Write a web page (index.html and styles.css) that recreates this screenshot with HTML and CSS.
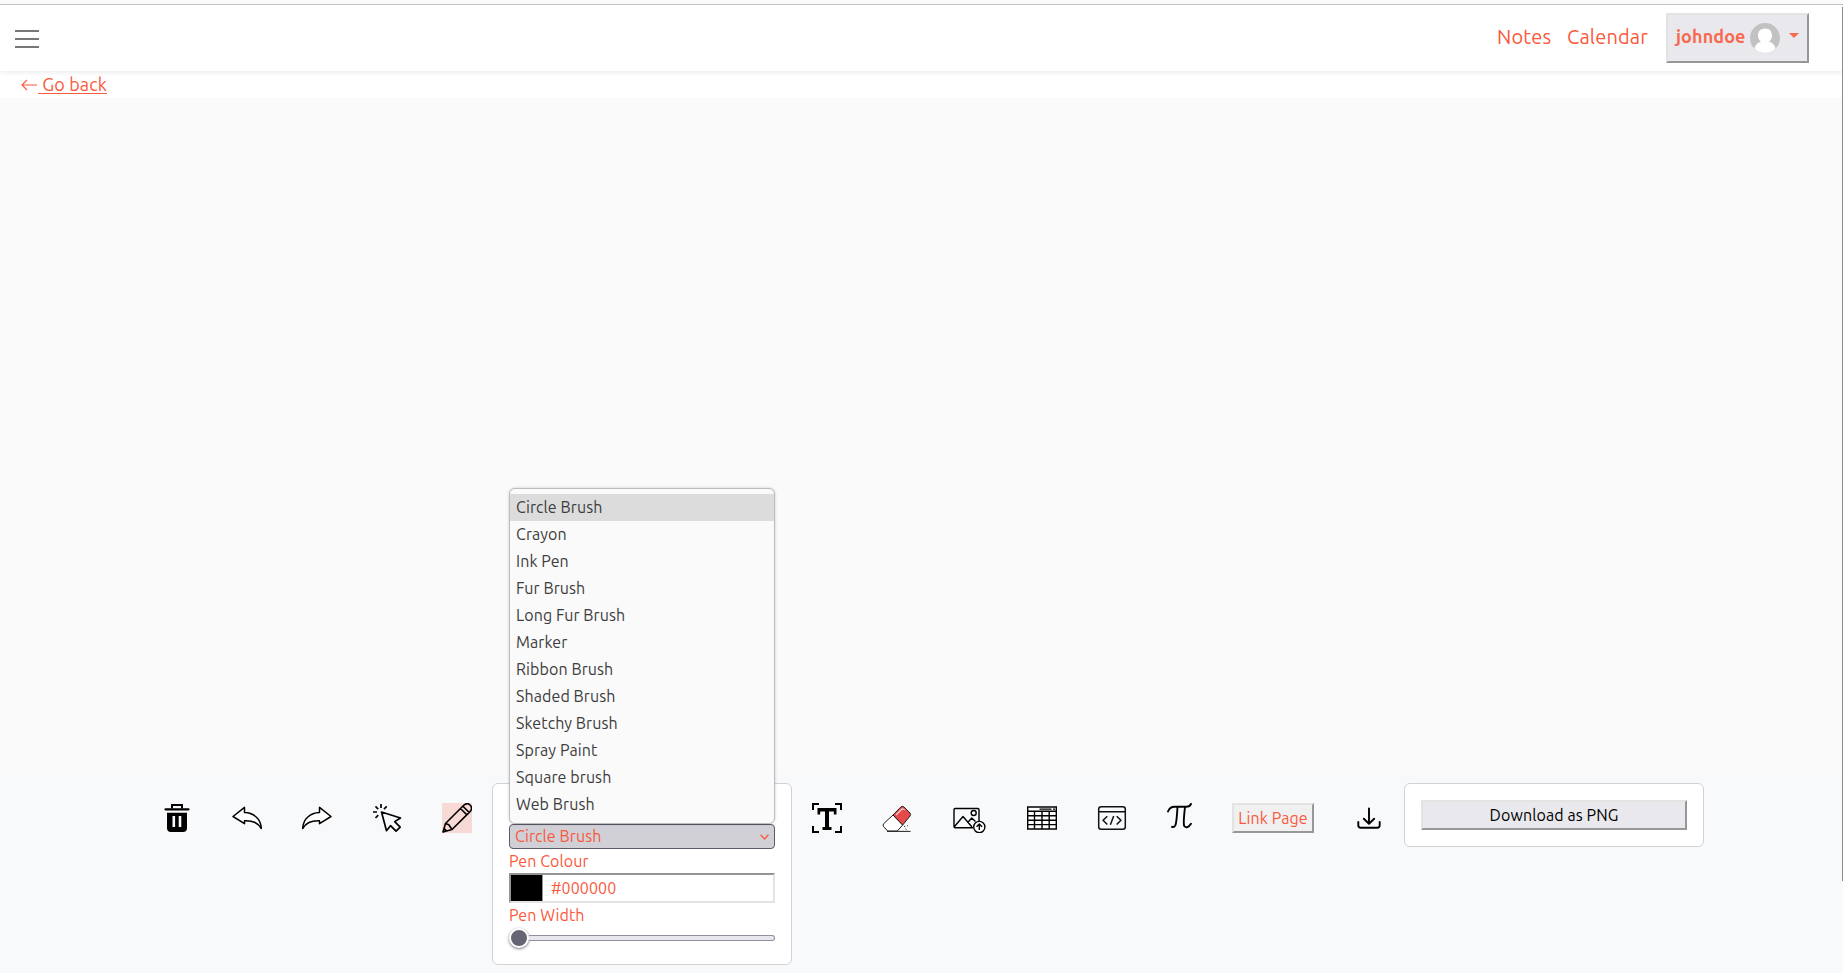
FILE: index.html
```html
<!DOCTYPE html>
<html lang="en">
<head>
<meta charset="utf-8">
<title>Notes</title>
<link rel="stylesheet" href="styles.css">
</head>
<body>
<div class="strip"></div>
<header class="navbar">
  <svg class="menu" viewBox="0 0 24 18"><path d="M0 1h24M0 9h24M0 17h24" stroke="#77777a" stroke-width="2"/></svg>
  <nav class="links">
    <a class="nav-link notes">Notes</a>
    <a class="nav-link calendar">Calendar</a>
    <button class="user"><span class="name">johndoe</span>
      <svg class="avatar" viewBox="0 0 30 30"><defs><clipPath id="disc"><circle cx="15" cy="15" r="15"/></clipPath></defs><g clip-path="url(#disc)"><rect width="30" height="30" fill="#c2c2c2"/><path d="M15 5.500c-4.700 0-7 3.100-7 7 0 2.700 1.200 4.700 3 6-3.900 1.600-6.300 4-6.800 8V31h21.600v-4.500c-.5-4-2.900-6.400-6.800-8 1.800-1.300 3-3.300 3-6 0-3.900-2.300-7-7-7z" fill="#fff"/></g></svg>
      <span class="caret"></span>
    </button>
  </nav>
</header>
<div class="back">
  <svg class="arrow" viewBox="0 0 16 12"><path d="M6 1 1 6l5 5M1 6h15" fill="none" stroke="#fa593c" stroke-width="1.100"/></svg>
  <a class="back-link">&nbsp;Go back</a>
</div>
<main class="board"></main>
<footer class="toolbar">
  <svg class="tool" viewBox="0 0 30 30"><path d="M3.500 6.300h23" stroke="#000" stroke-width="2.200" stroke-linecap="round"/><path d="M10 5.500V2h10v3.500" fill="none" stroke="#000" stroke-width="2"/><path fill-rule="evenodd" d="M5 9.800h20V25q0 4-4 4H9q-4 0-4-4zM10.500 13v11h2.600V13zM16.700 13v11h2.600V13z"/></svg>
  <svg class="tool" viewBox="0 0 30 30"><path d="M1 13.500 12.500 4.400v5.200c9 .3 16.500 6 16.800 15.900-3.400-5.500-7.600-8-16.800-7.700v2.900z" fill="#fff" stroke="#000" stroke-width="1.500" stroke-linejoin="round"/></svg>
  <svg class="tool" viewBox="0 0 30 30"><path d="M29 13.500 17.500 4.400v5.200c-9 .3-16.500 6-16.800 15.900 3.400-5.500 7.600-8 16.800-7.700v2.900z" fill="#fff" stroke="#000" stroke-width="1.500" stroke-linejoin="round"/></svg>
  <svg class="tool" viewBox="0 0 30 30" fill="none" stroke="#000" stroke-width="1.700" stroke-linejoin="round"><path d="M9.500 9 28.500 15l-5.800 3.600 5.500 5.600-4.200 4-5.500-5.500-4 5z"/><path d="M9 1v4M1 9h4M3.500 3.300l2.700 2.800M14.700 3.300 12 6.100M3.500 15l2.700-2.800"/></svg>
  <svg class="tool active" viewBox="0 0 30 30" fill="none" stroke="#000" stroke-width="1.600" stroke-linejoin="round"><path d="M1 29 3.500 20.500 21.500 2.500Q25-.9 28 2t.3 6.400L10 26.500zM3.500 20.500l3.300 1.200 3.200 4.800M18.500 5.500l6 6M21.200 3.500l6 6M1 29l3.500-1.200-2.300-2.300z"/></svg>

  <section class="card pen-card">
    <div class="select">Circle Brush<svg class="chevron" viewBox="0 0 8 5"><path d="m.5.500 3.500 3.700L7.500.500" fill="none" stroke="#fa593c" stroke-width="1.200"/></svg>
      <ul class="options">
        <li class="option chosen">Circle Brush</li>
        <li class="option">Crayon</li>
        <li class="option">Ink Pen</li>
        <li class="option">Fur Brush</li>
        <li class="option">Long Fur Brush</li>
        <li class="option">Marker</li>
        <li class="option">Ribbon Brush</li>
        <li class="option">Shaded Brush</li>
        <li class="option">Sketchy Brush</li>
        <li class="option">Spray Paint</li>
        <li class="option">Square brush</li>
        <li class="option">Web Brush</li>
      </ul>
    </div>
    <div class="label">Pen Colour</div>
    <div class="colour"><span class="swatch"></span><span class="hex">#000000</span></div>
    <div class="label">Pen Width</div>
    <div class="slider"><span class="thumb"></span><span class="track"></span></div>
  </section>

  <svg class="tool" viewBox="0 0 30 30"><path d="M1 7V1h6M23 1h6v6M29 23v6h-6M7 29H1v-6" fill="none" stroke="#000" stroke-width="2"/><path d="M5.500 5h19v6.500h-2.700V8.500H17V24h2.500v3h-9v-3H13V8.500H8.200v3H5.500z"/></svg>
  <svg class="tool" viewBox="0 0 30 30"><path d="M11 12 1.800 20.500Q.5 22 1.500 23.500L5.700 28h9.500l5.500-6z" fill="#fff" stroke="#222" stroke-width="1"/><path d="m11 12 8-8.200q1.500-1 3 .2l6 6q1.200 1.700 0 3L20.700 22z" fill="#e5494a" stroke="#222" stroke-width="1"/><path d="m14 12 6.300-6.200 2.400 1" fill="none" stroke="#fff" stroke-width="1.200" opacity=".75"/><path d="M5 28.400h23.500M22 23l1.200.8M23.500 25.800l1 .8M25 23.200l.9-.7" stroke="#222"/></svg>
  <svg class="tool image" viewBox="0 0 35 30" fill="none" stroke="#000" stroke-width="1.400" stroke-linejoin="round"><path d="M21 24.800H3.200q-1.200 0-1.200-1.200V6.700Q2 5.500 3.200 5.500h22.600Q27 5.500 27 6.700V18M2.500 23.500l8.500-10 9 10.500M16 19.200l3.700-4.200 3.800 3.500"/><circle cx="21.700" cy="10" r="2.500"/><circle cx="27.300" cy="24" r="5.600" fill="#fff"/><path d="M27.300 27v-6M24.500 23.700l2.800-2.800 2.800 2.800"/></svg>
  <svg class="tool" viewBox="0 0 30 30" fill="none" stroke="#000" stroke-width="1.400"><path fill="#fff" d="M.7 4h28.600v22H.7z"/><path d="M.7 8.300h28.600M.7 12.800h28.600M.7 17.200h28.600M.7 21.600h28.600M7.500 8.300V26M15 8.300V26M22.200 8.300V26"/><path d="M12.500 6.200h12M26 6.200h2" stroke-width="1.200"/></svg>
  <svg class="tool" viewBox="0 0 30 30" fill="none" stroke="#111" stroke-width="1.500"><rect x="1.700" y="3.700" width="26.600" height="22.600" rx="2.500"/><path d="M1.700 8.700h26.600M10.300 13.300l-4.200 4 4.200 4.200M19.700 13.300l4.200 4-4.200 4.200M16.700 13l-3.300 8.700"/></svg>
  <svg class="tool pi" viewBox="0 0 25 30" fill="none" stroke="#000" stroke-width="1.900" stroke-linecap="round"><path d="M1 8.500Q3 3.600 8 3.800h10.500Q23 4 24 .9M10.500 4Q9.600 20 8.300 22.500q-1.300 2.200-3.300 1.300M18 4q-1.900 16.500-.8 19 3 3.500 6.800-2.200"/></svg>
  <button class="link-page">Link Page</button>
  <svg class="tool" viewBox="0 0 30 30" fill="none" stroke="#000" stroke-width="1.900" stroke-linecap="round" stroke-linejoin="round"><path d="M15 5.500v15M9.800 15.700l5.200 5 5.200-5M4.300 19v3.300q0 2.500 2.500 2.500h16.400q2.500 0 2.500-2.500V19"/></svg>
  <section class="card save-card"><button class="download">Download as PNG</button></section>
</footer>
<div class="scroll-thumb"></div>
</body>
</html>
```
FILE: styles.css
```css
* { box-sizing: border-box; }
body {
  margin: 0;
  height: 973px;
  overflow: hidden;
  display: flex;
  flex-direction: column;
  font-family: Ubuntu, "Noto Sans", sans-serif;
  font-size: 16px;
  letter-spacing: 0.09px;
  color: #fa593c;
  background: #fafafa;
}
svg { display: block; flex: none; }
button { font: inherit; letter-spacing: inherit; color: inherit; margin: 0; padding: 0; }
.strip { height: 5px; flex: none; border-bottom: 1px solid #c2c2c2; }
.navbar {
  height: 66px;
  flex: none;
  display: flex;
  justify-content: space-between;
  padding: 8px 34px 0 15px;
  background: #fff;
  box-shadow: 0 2px 4px rgba(0, 0, 0, .07);
  position: relative;
}
.menu { width: 24px; height: 18px; margin-top: 17px; }
.links { display: flex; align-items: flex-start; }
.nav-link { font-size: 20px; line-height: 28px; padding-top: 10px; white-space: nowrap; letter-spacing: 0.15px; }
.notes { width: 70px; }
.calendar { width: 99px; }
.user {
  width: 143px;
  height: 50px;
  display: flex;
  align-items: center;
  border: 2px solid;
  border-color: #e3e3e3 #979797 #979797 #e3e3e3;
  background: #e9e8ed;
  padding-left: 8px;
  font-size: 18px;
  font-weight: 700;
  color: #f86a50;
}
.name { width: 74px; text-align: left; line-height: 26px; margin-top: -4px; }
.avatar { width: 30px; height: 30px; }
.caret { margin: -5px 0 0 9px; border: 5px solid transparent; border-top-color: #f86a50; border-bottom: 0; }
.back { height: 27px; flex: none; display: flex; background: #fff; padding-left: 21px; }
.arrow { width: 16px; height: 12px; margin-top: 8px; }
.back-link { margin-left: 1px; font-size: 18px; line-height: 26px; letter-spacing: 0.12px; text-decoration: underline; text-underline-offset: 2px; text-decoration-thickness: 1px; }
.board { height: 677px; flex: none; }
.toolbar {
  height: 198px;
  flex: none;
  display: flex;
  align-items: flex-start;
  gap: 40px;
  padding: 28px 0 0 162px;
  background: #f8f9fb;
}
.tool { width: 30px; height: 30px; }
.tool.image { width: 35px; }
.tool.pi { width: 25px; }
.active { background: #f7d9d5; }
.card {
  width: 300px;
  flex: none;
  margin: -20px -20px 0;
  padding: 16px;
  background: #fff;
  border: 1px solid #d1d2d4;
  border-radius: 6px;
}
.pen-card { height: 182px; padding-top: 40px; }
.save-card { height: 64px; }
.select {
  position: relative;
  height: 25px;
  display: flex;
  align-items: center;
  justify-content: space-between;
  padding: 0 5px 1px;
  border: 1px solid #5b5b68;
  border-radius: 4px;
  background: #d0d0d6;
}
.chevron { width: 9px; height: 6px; margin-top: 1px; }
.options {
  position: absolute;
  left: -1px;
  bottom: 24px;
  width: 266px;
  height: 336px;
  margin: 0;
  padding: 5px 0;
  list-style: none;
  background: #fafafa;
  border: 1px solid #bdbdbd;
  border-radius: 6px;
  box-shadow: 0 0 3px rgba(0, 0, 0, .2);
  color: #3d3d3d;
}
.option { height: 27px; line-height: 26px; padding-left: 6px; }
.chosen { background: #dcdcdc; }
.label { height: 24px; line-height: 24px; }
.colour {
  height: 30px;
  display: flex;
  align-items: center;
  border: 2px solid;
  border-color: #949494 #e3e3e3 #e3e3e3 #949494;
  background: #fff;
}
.swatch { width: 32px; height: 26px; background: #000; border-right: 1px solid #949494; }
.hex { margin-left: 8px; line-height: 24px; padding-bottom: 1px; }
.slider { height: 22px; display: flex; align-items: center; }
.thumb { width: 20px; height: 20px; flex: none; border-radius: 50%; border: 2px solid #fff; background: #666573; box-shadow: 0 1px 3px rgba(0, 0, 0, .55); }
.track { flex: 1; height: 6px; border: 1px solid #918fa0; border-left: 0; border-radius: 0 3px 3px 0; background: #e7e7ed; }
.link-page {
  width: 82px;
  height: 30px;
  flex: none;
  border: 2px solid;
  border-color: #e3e3e3 #979797 #979797 #e3e3e3;
  background: #f0f0f1;
}
.download {
  width: 100%;
  height: 30px;
  border: 2px solid;
  border-color: #e3e3e3 #979797 #979797 #e3e3e3;
  background: #e9e8ed;
  color: #000;
}
.scroll-thumb { position: absolute; right: 0; top: 7px; width: 1px; height: 874px; background: #8c8c8c; }
```
